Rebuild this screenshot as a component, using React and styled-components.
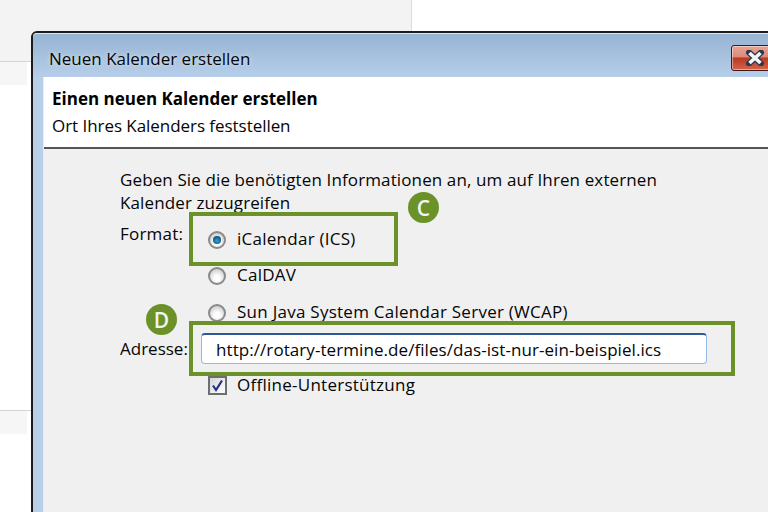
import React from "react";
import styled, { createGlobalStyle } from "styled-components";

const GlobalStyle = createGlobalStyle`
  html, body {
    margin: 0;
    padding: 0;
    overflow: hidden;
    background: #fff;
  }
`;

const Desktop = styled.div`
  position: relative;
  width: 768px;
  height: 512px;
  overflow: hidden;
  background: #fff;
  font-family: "Open Sans", "Noto Sans", sans-serif;
`;

const BackPanel = styled.div`
  display: flex;
  flex-direction: column;
  width: 411px;
  height: 512px;
  border-right: 1px solid #dcdcdc;
  background: #fff;
`;

const BackHeader = styled.div`
  height: 61px;
  background: #f3f3f3;
  border-bottom: 1px solid #d4d4d4;
`;

const BackStrip = styled.div`
  width: 27px;
  height: 23px;
  background: #f6f6f6;
  margin-bottom: ${(p) => p.$gap || 0}px;
`;

const BackRule = styled.div`
  height: 1px;
  background: #d4d4d4;
`;

const Dialog = styled.div`
  position: absolute;
  left: 31px;
  top: 31px;
  width: 760px;
  height: 500px;
  display: flex;
  flex-direction: column;
  box-sizing: border-box;
  border: 2px solid #1c1c1c;
  border-radius: 6px 6px 0 0;
  background: #b7cfe9;
`;

const TitleBar = styled.div`
  height: 44px;
  flex: none;
  display: flex;
  align-items: center;
  justify-content: space-between;
  padding: 5px 10px 0 16px;
  border-radius: 4px 4px 0 0;
  border-top: 1px solid #dbe6f1;
  box-sizing: border-box;
  background: linear-gradient(#97b4d3, #b6cee9);
`;

const TitleText = styled.span`
  font-size: 17px;
  color: #050505;
  text-shadow: 0 0 4px rgba(255, 255, 255, 0.7);
`;

const CloseButton = styled.div`
  width: 48px;
  height: 26px;
  display: flex;
  align-items: center;
  justify-content: center;
  box-sizing: border-box;
  border: 1px solid #3a1a1a;
  border-radius: 3px;
  background: linear-gradient(#e9a596 0%, #dd8a7a 45%, #b83a22 50%, #d8614a 100%);
  box-shadow: inset 0 0 0 1px rgba(255, 255, 255, 0.45);
`;

const Client = styled.div`
  flex: 1;
  margin-left: 10px;
  display: flex;
  flex-direction: column;
  background: #f0f0f0;
  border-left: 1px solid #e4edf6;
`;

const Header = styled.div`
  height: 72px;
  box-sizing: border-box;
  padding: 9px 8px 0;
  background: #fff;
  border-bottom: 2px solid #555;
`;

const HeaderTitle = styled.div`
  font-size: 17px;
  line-height: 25px;
  font-weight: 700;
  color: #000;
`;

const HeaderSub = styled.div`
  font-size: 17px;
  line-height: 29px;
  color: #050505;
  letter-spacing: -0.05px;
`;

const Body = styled.div`
  position: relative;
  flex: 1;
  padding: 19px 0 0 76px;
  color: #050505;
  font-size: 17px;
`;

const Intro = styled.p`
  margin: 0 0 8px;
  width: 570px;
  line-height: 23px;
  letter-spacing: 0.12px;
`;

const FormGrid = styled.div`
  display: grid;
  grid-template-columns: 81px 520px;
  grid-auto-rows: auto;
`;

const Label = styled.div`
  line-height: 24px;
  margin-top: ${(p) => p.$top || 0}px;
  letter-spacing: ${(p) => p.$spacing || 0}px;
`;

const Options = styled.div`
  display: flex;
  flex-direction: column;
  padding: ${(p) => p.$top || 0}px 0 0 7px;
`;

const Option = styled.label`
  display: flex;
  align-items: center;
  gap: 11px;
  height: 24px;
  margin-bottom: ${(p) => p.$gap || 0}px;
  line-height: 24px;
  letter-spacing: 0.26px;
`;

const Radio = styled.span`
  width: 18px;
  height: 18px;
  flex: none;
  margin-top: 2px;
  display: flex;
  align-items: center;
  justify-content: center;
  box-sizing: border-box;
  border-radius: 50%;
  border: 2px solid #8a8a8a;
  background: radial-gradient(circle at 50% 65%, #fdfdfd 25%, #c4c4c4 90%);
`;

const RadioDot = styled.span`
  width: 8px;
  height: 8px;
  border-radius: 50%;
  background: radial-gradient(circle at 50% 60%, #2fa6d8, #0b3f66 85%);
`;

const AddressInput = styled.input`
  display: block;
  width: 506px;
  height: 31px;
  margin-top: 9px;
  box-sizing: border-box;
  padding: 0 14px;
  border: 1px solid #8fbce8;
  border-top: 2px solid #2d5a94;
  border-radius: 4px;
  background: #fff;
  color: #050505;
  font: 17px "Open Sans", "Noto Sans", sans-serif;
  letter-spacing: 0.07px;
  outline: none;
`;

const CheckRow = styled(Option)`
  margin-top: 9px;
  gap: 10px;
`;

const CheckBox = styled.span`
  width: 19px;
  height: 19px;
  flex: none;
  display: flex;
  align-items: center;
  justify-content: center;
  box-sizing: border-box;
  border: 2px solid #6e6e6e;
  background: linear-gradient(135deg, #d4d4d4, #fff);
`;

const Highlight = styled.div`
  position: absolute;
  left: ${(p) => p.$left}px;
  top: ${(p) => p.$top}px;
  width: ${(p) => p.$width}px;
  height: ${(p) => p.$height}px;
  box-sizing: border-box;
  border: 4px solid #6a9229;
  pointer-events: none;
`;

const Badge = styled.div`
  position: absolute;
  left: ${(p) => p.$left}px;
  top: ${(p) => p.$top}px;
  width: 31px;
  height: 31px;
  display: flex;
  align-items: center;
  justify-content: center;
  border-radius: 50%;
  background: #6a9229;
  color: #f4f4f4;
  font-size: 21px;
  font-weight: 600;
`;

const App = () => {
  return (
    <Desktop>
      <GlobalStyle />
      <BackPanel>
        <BackHeader />
        <BackStrip $gap={325} />
        <BackRule />
        <BackStrip />
      </BackPanel>
      <Dialog>
        <TitleBar>
          <TitleText>Neuen Kalender erstellen</TitleText>
          <CloseButton>
            <svg width="20" height="16" viewBox="0 0 20 16">
              <path
                d="M4 2.5 L16 13.5 M16 2.5 L4 13.5"
                stroke="#2c3a4c"
                strokeWidth="6"
                strokeLinecap="round"
              />
              <path
                d="M4.5 3 L15.5 13 M15.5 3 L4.5 13"
                stroke="#f4f7fa"
                strokeWidth="3.6"
              />
            </svg>
          </CloseButton>
        </TitleBar>
        <Client>
          <Header>
            <HeaderTitle>Einen neuen Kalender erstellen</HeaderTitle>
            <HeaderSub>Ort Ihres Kalenders feststellen</HeaderSub>
          </Header>
          <Body>
            <Intro>
              Geben Sie die benötigten Informationen an, um auf Ihren externen
              <br />
              Kalender zuzugreifen
            </Intro>
            <FormGrid>
              <Label $spacing={0.2}>Format:</Label>
              <Options $top={5}>
                <Option $gap={12}>
                  <Radio>
                    <RadioDot />
                  </Radio>
                  iCalendar (ICS)
                </Option>
                <Option $gap={13}>
                  <Radio />
                  CalDAV
                </Option>
                <Option>
                  <Radio />
                  Sun Java System Calendar Server (WCAP)
                </Option>
              </Options>
              <Label $top={13}>Adresse:</Label>
              <div>
                <AddressInput
                  readOnly
                  value="http://rotary-termine.de/files/das-ist-nur-ein-beispiel.ics"
                />
              </div>
              <div />
              <Options>
                <CheckRow>
                  <CheckBox>
                    <svg width="13" height="13" viewBox="0 0 13 13">
                      <path
                        d="M2 6.5 L5 11 L11 1.5"
                        fill="none"
                        stroke="#23308a"
                        strokeWidth="2.2"
                      />
                    </svg>
                  </CheckBox>
                  Offline-Unterstützung
                </CheckRow>
              </Options>
            </FormGrid>
            <Highlight $left={145} $top={63} $width={209} $height={54} />
            <Highlight $left={145} $top={172} $width={546} $height={55} />
            <Badge $left={364} $top={43}>C</Badge>
            <Badge $left={102} $top={155}>D</Badge>
          </Body>
        </Client>
      </Dialog>
    </Desktop>
  );
};

export default App;
